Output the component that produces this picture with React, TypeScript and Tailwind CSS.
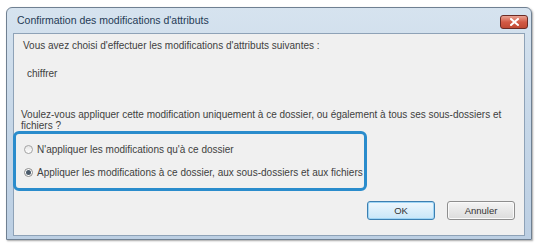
export default function App() {
  return (
    <div className="w-[537px] h-[246px] bg-white overflow-hidden" style={{ fontFamily: '"Liberation Sans", Arial, sans-serif' }}>
      <div className="ml-[6px] mt-[7px] w-[526px] h-[233px] border border-[#6f8092] rounded-t-[6px] bg-gradient-to-b from-[#d6e3ef] via-[#c6d7e8] to-[#bccfe3] flex flex-col px-[6px] pb-[3px] shadow-[1px_1px_2px_rgba(0,0,0,0.35)]">
        {/* title bar */}
        <div className="h-[25px] flex items-center justify-between shrink-0">
          <span className="pl-[4px] text-[10.5px] text-[#243a55]">Confirmation des modifications d'attributs</span>
          <button className="w-[28px] h-[14px] mt-[2px] -mr-[3px] rounded-[3px] border border-[#6b2b25] bg-gradient-to-b from-[#e8a293] via-[#d35a45] to-[#c04a34] flex items-center justify-center">
            <svg width="9" height="8" viewBox="0 0 9 8">
              <path d="M1 1 L8 7 M8 1 L1 7" stroke="white" strokeWidth="2" strokeLinecap="square" />
            </svg>
          </button>
        </div>

        {/* client area */}
        <div className="flex-1 bg-[#f0f0f0] border border-[#8ea2b7] flex flex-col text-[10px] text-[#404040] leading-[11px]">
          <div className="pl-[9px] pt-[6px]">Vous avez choisi d'effectuer les modifications d'attributs suivantes :</div>
          <div className="pl-[13px] pt-[17px]">chiffrer</div>
          <div className="pl-[7px] pt-[30px] pr-[20px]">
            Voulez-vous appliquer cette modification uniquement à ce dossier, ou également à tous ses sous-dossiers et fichiers ?
          </div>

          <div className="-ml-[1px] w-[354px] h-[60px] border-[3px] border-[#2a8ccc] rounded-[6px] flex flex-col justify-center gap-[12px] pl-[8px]">
            <label className="flex items-center gap-[4px]">
              <span className="w-[9px] h-[9px] rounded-full border border-[#a3a3a3] bg-gradient-to-b from-[#e6e6e6] to-[#ffffff]" />
              <span>N'appliquer les modifications qu'à ce dossier</span>
            </label>
            <label className="flex items-center gap-[4px]">
              <span className="w-[9px] h-[9px] rounded-full border border-[#8a8a8a] bg-white flex items-center justify-center">
                <span className="w-[5px] h-[5px] rounded-full bg-[#4a5a6a]" />
              </span>
              <span>Appliquer les modifications à ce dossier, aux sous-dossiers et aux fichiers</span>
            </label>
          </div>

          <div className="flex justify-end gap-[12px] pr-[9px] mt-[10px]">
            <button className="w-[68px] h-[19px] rounded-[3px] border border-[#3c7fb1] bg-gradient-to-b from-[#eef7fd] to-[#c8e6f8] shadow-[inset_0_0_0_1px_#9fd5f5] text-[9.5px] text-[#333]">OK</button>
            <button className="w-[68px] h-[19px] rounded-[3px] border border-[#8e8e8e] bg-gradient-to-b from-[#f4f4f4] to-[#dcdcdc] shadow-[inset_0_0_0_1px_#fafafa] text-[9.5px] text-[#333]">Annuler</button>
          </div>
        </div>
      </div>
    </div>
  );
}
